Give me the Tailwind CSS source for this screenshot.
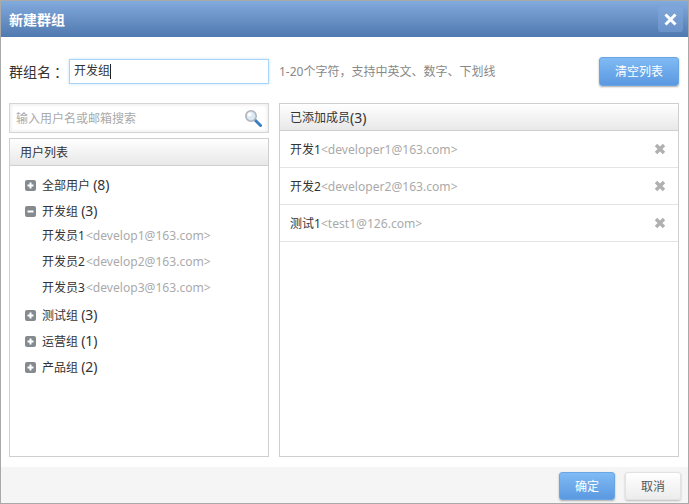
<!DOCTYPE html>
<html lang="zh">
<head>
<meta charset="utf-8">
<title>新建群组</title>
<script src="https://cdn.jsdelivr.net/npm/@tailwindcss/browser@4"></script>
</head>
<body class="bg-white">
<div class="w-[689px] h-[504px] flex flex-col border border-[#a9a9a9] overflow-hidden text-[12px] text-[#333] font-['Noto_Sans','Noto_Sans_CJK_SC',sans-serif]">

  <!-- Header -->
  <div class="h-[36px] shrink-0 flex items-center justify-between pl-[8px] pr-[5px] bg-linear-to-b from-[#82aadd] to-[#5079af]">
    <span class="text-[14px] font-bold text-white">新建群组</span>
    <span class="w-[25px] h-[25px] rounded-[3px] bg-linear-to-b from-[#7ea6da] to-[#6b93c9] flex items-center justify-center">
      <svg class="w-[15px] h-[15px]" viewBox="0 0 15 15"><path d="M2.5 2.5l10 10M12.5 2.5l-10 10" stroke="#fff" stroke-width="3"/></svg>
    </span>
  </div>

  <!-- Body -->
  <div class="flex-1 flex flex-col px-[8px] min-h-0">
    <div class="h-[66px] shrink-0 flex items-center pt-[2px]">
      <span class="w-[60px] h-[20px] flex items-center text-[14px] shrink-0">群组名<span class="ml-[3px]">：</span></span>
      <div class="w-[200px] h-[25px] border border-[#a8d4f8] shadow-[0_0_3px_#c4e2fb] flex items-center pl-[4px]">开发组<span class="w-px h-[15px] bg-[#222]"></span></div>
      <span class="ml-[10px] pt-[1px] text-[#888]">1-20个字符，支持中英文、数字、下划线</span>
      <button class="ml-auto mr-[1px] pt-[1px] w-[80px] h-[29px] rounded-[3px] border border-[#6aa5e4] bg-linear-to-b from-[#80bbf5] to-[#5a98e0] shadow-[0_1px_2px_#aaa] text-white">清空列表</button>
    </div>

    <div class="flex-1 flex gap-[10px] min-h-0 mb-[10px]">
      <!-- Left column -->
      <div class="w-[260px] flex flex-col gap-[5px]">
        <div class="h-[30px] shrink-0 border border-[#d5d5d5] shadow-[inset_0_0_4px_#e4e4e4] flex items-center justify-between pl-[6px] pr-[6px]">
          <span class="pt-[1px] text-[#aaa]">输入用户名或邮箱搜索</span>
          <svg class="w-[18px] h-[18px]" viewBox="0 0 18 18">
            <path d="M11 11l5.5 5.5" stroke="#3b7fc0" stroke-width="3" stroke-linecap="round"/>
            <circle cx="7" cy="7" r="5.2" fill="#dbe9f7" stroke="#b0b5bb" stroke-width="1.6"/>
            <circle cx="5.5" cy="5.5" r="2" fill="#fff"/>
          </svg>
        </div>
        <div class="flex-1 flex flex-col border border-[#cfcfcf]">
          <div class="h-[27px] shrink-0 flex items-center pl-[10px] pt-[1px] border-b border-[#cfcfcf] bg-linear-to-b from-white to-[#e8e8e8]">用户列表</div>
          <div class="pl-[15px] pt-[6px] flex flex-col">
            <div class="h-[26px] flex items-center gap-[6px]">
              <svg class="w-[11px] h-[11px]" viewBox="0 0 11 11"><rect width="11" height="11" rx="2" fill="#858a8e"/><path d="M5.5 2.5v6M2.5 5.5h6" stroke="#fff" stroke-width="2"/></svg>
              <span class="pb-[2px]">全部用户 <span class="text-[14px]">(8)</span></span>
            </div>
            <div class="h-[26px] flex items-center gap-[6px]">
              <svg class="w-[11px] h-[11px]" viewBox="0 0 11 11"><rect width="11" height="11" rx="2" fill="#858a8e"/><path d="M2.5 5.5h6" stroke="#fff" stroke-width="2"/></svg>
              <span class="pb-[2px]">开发组 <span class="text-[14px]">(3)</span></span>
            </div>
            <div class="h-[26px] flex items-center pl-[17px] -mt-[1px]">开发员1<span class="ml-[1px] text-[12.1px] text-[#aaa]">&lt;develop1@163.com&gt;</span></div>
            <div class="h-[26px] flex items-center pl-[17px]">开发员2<span class="ml-[1px] text-[12.1px] text-[#aaa]">&lt;develop2@163.com&gt;</span></div>
            <div class="h-[26px] flex items-center pl-[17px]">开发员3<span class="ml-[1px] text-[12.1px] text-[#aaa]">&lt;develop3@163.com&gt;</span></div>
            <div class="h-[26px] flex items-center gap-[6px] mt-[1px]">
              <svg class="w-[11px] h-[11px]" viewBox="0 0 11 11"><rect width="11" height="11" rx="2" fill="#858a8e"/><path d="M5.5 2.5v6M2.5 5.5h6" stroke="#fff" stroke-width="2"/></svg>
              <span class="pb-[2px]">测试组 <span class="text-[14px]">(3)</span></span>
            </div>
            <div class="h-[26px] flex items-center gap-[6px]">
              <svg class="w-[11px] h-[11px]" viewBox="0 0 11 11"><rect width="11" height="11" rx="2" fill="#858a8e"/><path d="M5.5 2.5v6M2.5 5.5h6" stroke="#fff" stroke-width="2"/></svg>
              <span class="pb-[2px]">运营组 <span class="text-[14px]">(1)</span></span>
            </div>
            <div class="h-[26px] flex items-center gap-[6px]">
              <svg class="w-[11px] h-[11px]" viewBox="0 0 11 11"><rect width="11" height="11" rx="2" fill="#858a8e"/><path d="M5.5 2.5v6M2.5 5.5h6" stroke="#fff" stroke-width="2"/></svg>
              <span class="pb-[2px]">产品组 <span class="text-[14px]">(2)</span></span>
            </div>
          </div>
        </div>
      </div>

      <!-- Right column -->
      <div class="w-[400px] flex flex-col border border-[#cfcfcf]">
        <div class="h-[27px] shrink-0 flex items-center pl-[10px] pt-[1px] border-b border-[#cfcfcf] bg-linear-to-b from-white to-[#e8e8e8]">已添加成员<span class="text-[14px]">(3)</span></div>
        <div class="h-[37px] shrink-0 flex items-center justify-between pl-[10px] pr-[12px] border-b border-[#e4e4e4]">
          <span class="pt-[2px]">开发1<span class="text-[12.1px] text-[#aaa]">&lt;developer1@163.com&gt;</span></span>
          <svg class="w-[12px] h-[12px]" viewBox="0 0 12 12"><path d="M2 2l8 8M10 2l-8 8" stroke="#b0b0b0" stroke-width="3.4"/></svg>
        </div>
        <div class="h-[37px] shrink-0 flex items-center justify-between pl-[10px] pr-[12px] border-b border-[#e4e4e4]">
          <span class="pt-[2px]">开发2<span class="text-[12.1px] text-[#aaa]">&lt;developer2@163.com&gt;</span></span>
          <svg class="w-[12px] h-[12px]" viewBox="0 0 12 12"><path d="M2 2l8 8M10 2l-8 8" stroke="#b0b0b0" stroke-width="3.4"/></svg>
        </div>
        <div class="h-[37px] shrink-0 flex items-center justify-between pl-[10px] pr-[12px] border-b border-[#e4e4e4]">
          <span class="pt-[2px]">测试1<span class="text-[12.1px] text-[#aaa]">&lt;test1@126.com&gt;</span></span>
          <svg class="w-[12px] h-[12px]" viewBox="0 0 12 12"><path d="M2 2l8 8M10 2l-8 8" stroke="#b0b0b0" stroke-width="3.4"/></svg>
        </div>
      </div>
    </div>
  </div>

  <!-- Footer -->
  <div class="h-[36px] shrink-0 bg-[#f5f5f5] flex items-center justify-end gap-[10px] pr-[7px] pt-[2px]">
    <button class="w-[56px] h-[28px] pt-[1px] rounded-[3px] border border-[#6aa5e4] bg-linear-to-b from-[#80bbf5] to-[#5a98e0] shadow-[0_1px_2px_#aaa] text-white">确定</button>
    <button class="w-[56px] h-[28px] pt-[1px] rounded-[3px] border border-[#e2e2e2] bg-linear-to-b from-white to-[#ececec] shadow-[0_1px_2px_#bbb] text-[#555]">取消</button>
  </div>
</div>
</body>
</html>
